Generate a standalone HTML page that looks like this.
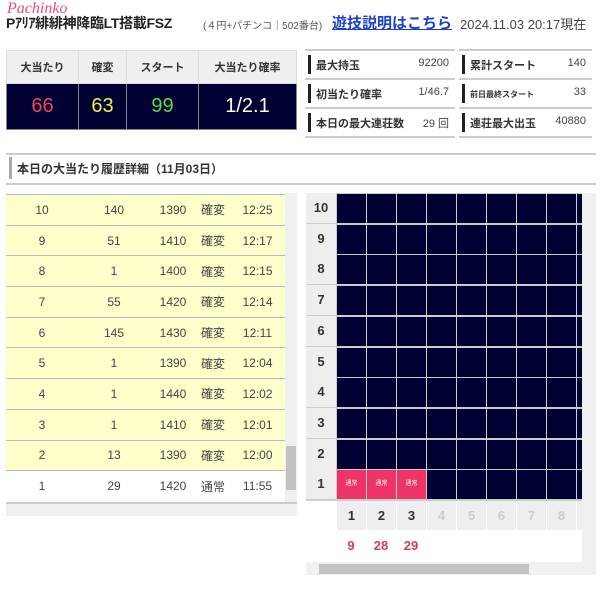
<!DOCTYPE html>
<html><head><meta charset="utf-8"><style>
*{margin:0;padding:0;box-sizing:border-box}
body{width:600px;height:592px;background:#fff;position:relative;overflow:hidden;font-family:"Liberation Sans","Noto Sans CJK JP",sans-serif;color:#333}
.a{position:absolute}
.pk{left:7px;top:0;font:italic 16px/18px "Liberation Serif",serif;color:#e0507a}
.tt{left:6px;top:13px;font-size:14px;font-weight:bold;color:#222;letter-spacing:-0.3px}
.sub{left:203px;top:17px;font-size:10px;color:#555}
.lk{left:332px;top:12px;font-size:15px;font-weight:bold;color:#1a3fd0;text-decoration:underline}
.dt{left:460px;top:14px;font-size:13px;color:#444}
table{border-collapse:collapse}
.st{left:6px;top:50px;width:291px}
.st td{text-align:center;border:1px solid #ddd}
.st .h td{background:#efefef;height:33px;font-size:11px;font-weight:bold;color:#333}
.st .v td{background:#000033;height:46px;font-size:20px;border-color:#888}
.info{font-size:11px;font-weight:bold;color:#333}
.ir{position:absolute;height:29px;border-top:2px solid #ccc}
.ir .b{position:absolute;left:3px;top:4px;width:3px;height:19px;background:#222}
.ir .l{position:absolute;left:11px;top:6px}
.ir .r{position:absolute;right:6px;top:6px;font-weight:normal;color:#444}
.hl{left:6px;width:590px;height:2px;background:#ccc}
.hist{left:6px;top:194px;width:279px}
.hist td{height:30.7px;border-top:1px solid #bbb;background:#ffffcc;text-align:center;font-size:12px;color:#444}
.cell{position:absolute;width:29px;height:29px;background:#000033}
.lab{position:absolute;width:30px;height:30px;background:#eee;font-size:13px;font-weight:bold;text-align:center;line-height:30px;color:#333}
</style></head><body>
<div class="a pk">Pachinko</div>
<div class="a tt">Pｱﾘｱ緋緋神降臨LT搭載FSZ</div>
<div class="a sub">(４円+パチンコ｜502番台)</div>
<div class="a lk">遊技説明はこちら</div>
<div class="a dt">2024.11.03 20:17現在</div>

<table class="a st">
<tr class="h"><td style="width:72px">大当たり</td><td style="width:48px">確変</td><td style="width:72px">スタート</td><td>大当たり確率</td></tr>
<tr class="v"><td style="color:#ee4455">66</td><td style="color:#eeee55">63</td><td style="color:#55dd44">99</td><td style="color:#fff">1/2.1</td></tr>
</table>

<div class="info">
<div class="ir" style="left:305px;top:49px;width:150px"><div class="b"></div><span class="l">最大持玉</span><span class="r">92200</span></div>
<div class="ir" style="left:305px;top:78px;width:150px"><div class="b"></div><span class="l">初当たり確率</span><span class="r">1/46.7</span></div>
<div class="ir" style="left:305px;top:107px;width:150px;border-bottom:2px solid #ccc;height:31px"><div class="b"></div><span class="l">本日の最大連荘数</span><span class="r">29 回</span></div>
<div class="ir" style="left:459px;top:49px;width:133px"><div class="b"></div><span class="l">累計スタート</span><span class="r">140</span></div>
<div class="ir" style="left:459px;top:78px;width:133px"><div class="b"></div><span class="l" style="font-size:8px;top:9px">前日最終スタート</span><span class="r">33</span></div>
<div class="ir" style="left:459px;top:107px;width:133px;border-bottom:2px solid #ccc;height:31px"><div class="b"></div><span class="l">連荘最大出玉</span><span class="r">40880</span></div>
</div>

<div class="a hl" style="top:153px"></div>
<div class="a hl" style="top:183px"></div>
<div class="a" style="left:9px;top:157px;width:3px;height:22px;background:#aaa"></div>
<div class="a" style="left:17px;top:160px;font-size:12px;font-weight:bold;color:#333">本日の大当たり履歴詳細（11月03日）</div>

<table class="a hist">
<tr><td style="width:72px">10</td><td style="width:72px">140</td><td style="width:46px">1390</td><td style="width:34px">確変</td><td>12:25</td></tr>
<tr><td>9</td><td>51</td><td>1410</td><td>確変</td><td>12:17</td></tr>
<tr><td>8</td><td>1</td><td>1400</td><td>確変</td><td>12:15</td></tr>
<tr><td>7</td><td>55</td><td>1420</td><td>確変</td><td>12:14</td></tr>
<tr><td>6</td><td>145</td><td>1430</td><td>確変</td><td>12:11</td></tr>
<tr><td>5</td><td>1</td><td>1390</td><td>確変</td><td>12:04</td></tr>
<tr><td>4</td><td>1</td><td>1440</td><td>確変</td><td>12:02</td></tr>
<tr><td>3</td><td>1</td><td>1410</td><td>確変</td><td>12:01</td></tr>
<tr><td>2</td><td>13</td><td>1390</td><td>確変</td><td>12:00</td></tr>
<tr><td style="background:#fff">1</td><td style="background:#fff">29</td><td style="background:#fff">1420</td><td style="background:#fff">通常</td><td style="background:#fff">11:55</td></tr>
</table>
<div class="a" style="left:285px;top:193px;width:12px;height:309px;background:#f0f0f0"></div>
<div class="a" style="left:286px;top:446px;width:10px;height:44px;background:#c2c2c2"></div>
<div class="a" style="left:6px;top:502px;width:291px;height:14px;background:#f0f0f0;border-top:2px solid #ccc"></div>

<div class="a" style="left:306px;top:193px;width:276px;height:308px;background:#ccc"></div>
<div class="a" style="left:582px;top:193px;width:14px;height:382px;background:#f0f0f0"></div>
<div class="a" style="left:306px;top:562px;width:290px;height:13px;background:#f0f0f0"></div>
<div class="a" style="left:319px;top:564px;width:210px;height:10px;background:#c2c2c2"></div>
<div id="g"></div>
<script>
var h='';
for(var r=0;r<10;r++){var y=193+r*30.7;h+='<div class="lab" style="left:306px;top:'+y+'px">'+(10-r)+'</div>';
for(var c=0;c<9;c++){var x=337+c*30;var w=c==8?5:29;var pink=(r==9&&c<3);
h+='<div class="cell" style="left:'+x+'px;top:'+(y+1)+'px;width:'+w+'px;'+(pink?'background:#ee3366;color:#fff;font-size:6px;text-align:center;line-height:29px':'')+'">'+(pink?'通常':'')+'</div>';}}
for(var c=0;c<9;c++){h+='<div class="a" style="left:'+(337+c*30)+'px;top:501px;width:'+(c==8?5:29)+'px;height:29px;background:#eee;text-align:center;line-height:29px;font-size:13px;font-weight:bold;color:'+(c<3?'#333':'#ccc')+'">'+(c<8?(c+1):'')+'</div>';}
var n=[9,28,29];for(var c=0;c<3;c++){h+='<div class="a" style="left:'+(336+c*30)+'px;top:538px;width:30px;text-align:center;font-size:13px;font-weight:bold;color:#d04050">'+n[c]+'</div>';}
document.getElementById('g').innerHTML=h;
</script>
</body></html>
